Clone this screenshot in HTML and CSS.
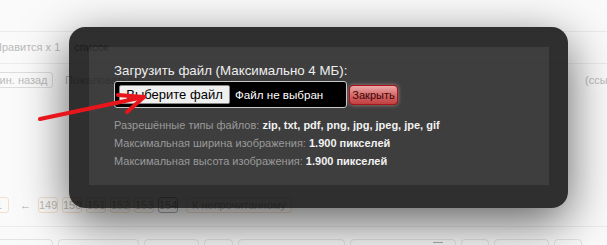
FILE: index.html
```html
<!DOCTYPE html>
<html lang="ru">
<head>
    <meta charset="UTF-8">
    <title>Загрузить файл</title>
    <link rel="stylesheet" href="styles.css">
</head>
<body>
    <div class="page">
        <div class="post-bar">
            <span class="likes">Нравится x 1</span>
            <span class="list">список</span>
        </div>
        <div class="post-meta">
            <span class="time">мин. назад</span>
            <span class="report">Пожаловаться</span>
            <span class="link">(ссылка)</span>
        </div>
        <div class="pager">
            <span class="pg">1</span>
            <span class="pg-arrow">&larr;</span>
            <span class="pg">149</span>
            <span class="pg">150</span>
            <span class="pg">151</span>
            <span class="pg">152</span>
            <span class="pg">153</span>
            <span class="pg current">154</span>
            <span class="pg unread">К непрочитанному</span>
        </div>
        <div class="tabs">
            <span class="tab w58"></span>
            <span class="tab w81"></span>
            <span class="tab w55"></span>
            <span class="tab w29"></span>
            <span class="tab w107"></span>
            <span class="tab w106"><i class="menu-mark"></i></span>
            <span class="tab w28"></span>
            <span class="tab w55"></span>
            <span class="tab w28"></span>
        </div>
    </div>

    <div class="modal">
        <div class="modal-inner">
            <div class="upload-title">Загрузить файл (Максимально 4 МБ):</div>
            <div class="upload-row">
                <label class="file-box">
                    <span class="file-btn">Выберите файл</span>
                    <span class="file-name">Файл не выбран</span>
                </label>
                <button class="close-btn">Закрыть</button>
            </div>
            <div class="info">
                <p>Разрешённые типы файлов: <b>zip, txt, pdf, png, jpg, jpeg, jpe, gif</b></p>
                <p>Максимальная ширина изображения: <b>1.900 пикселей</b></p>
                <p>Максимальная высота изображения: <b>1.900 пикселей</b></p>
            </div>
        </div>
    </div>

    <!-- red annotation arrow -->
    <svg class="arrow" width="607" height="245" viewBox="0 0 607 245">
        <g fill="none" stroke="#e8161c" stroke-width="4" stroke-linecap="round" stroke-linejoin="round">
            <path d="M40 119 L144 97"/>
            <path d="M118 95 L144 97 L127 112"/>
        </g>
    </svg>
</body>
</html>
```

FILE: styles.css
```css
body {
    margin: 0;
    width: 607px;
    height: 245px;
    overflow: hidden;
    position: relative;
    background-color: #fafafa;
    font-family: 'Liberation Sans', Arial, sans-serif;
}
.page {
    padding-top: 31px;
    color: #bbb;
    font-size: 11px;
    white-space: nowrap;
}
.post-bar {
    height: 29px;
    padding-bottom: 2px;
    border-top: 1px solid #ececec;
    border-bottom: 1px solid #ececec;
    display: flex;
    align-items: center;
    margin-left: -6px;
    gap: 14px;
}
.list {
    color: #999;
}
.post-meta {
    height: 32px;
    display: flex;
    align-items: center;
    margin-left: -14px;
}
.time {
    box-sizing: border-box;
    width: 67px;
    border: 1px solid #ddd;
    border-radius: 3px;
    padding: 1px 5px;
    text-align: right;
}
.report {
    margin-left: 12px;
}
.link {
    margin-left: auto;
    margin-right: -40px;
    width: 62px;
}
.pager {
    margin-top: 101px;
    display: flex;
    align-items: center;
    gap: 4px;
    margin-left: -11px;
}
.pg {
    box-sizing: border-box;
    width: 20px;
    height: 16px;
    line-height: 14px;
    border: 1px solid #f3dfc9;
    border-radius: 3px;
    text-align: center;
    color: #c2b8ae;
}
.pg-arrow {
    width: 11px;
    margin: 0 3px 0 7px;
    color: #aaa;
}
.pg.current {
    border-color: #aaa;
    color: #aaa;
}
.pg.unread {
    width: auto;
    padding: 0 5px;
    margin-left: 4px;
}
.tabs {
    margin-top: 13px;
    border-top: 1px solid #ececec;
    padding-top: 12px;
    display: flex;
    gap: 5px;
    margin-left: -5px;
}
.tab {
    height: 20px;
    border: 1px solid #e3e3e3;
    border-radius: 4px 4px 0 0;
    box-sizing: border-box;
    position: relative;
}
.w58 { width: 58px; }
.w81 { width: 81px; }
.w55 { width: 55px; }
.w29 { width: 29px; }
.w107 { width: 107px; }
.w106 { width: 106px; }
.w28 { width: 28px; }
.menu-mark {
    position: absolute;
    left: 82px;
    top: 2px;
    width: 10px;
    height: 3px;
    border-top: 1px solid #aaa;
    border-bottom: 1px solid #aaa;
}

/* upload dialog */
.modal {
    position: absolute;
    left: 69px;
    top: 27px;
    width: 499px;
    height: 181px;
    box-sizing: border-box;
    padding: 20px 19px 23px 20px;
    border-radius: 16px;
    background-color: rgba(0, 0, 0, 0.81);
    box-shadow: 0 14px 48px rgba(0, 0, 0, 0.62);
}
.modal-inner {
    height: 100%;
    box-sizing: border-box;
    background-color: rgba(255, 255, 255, 0.075);
    padding: 16px 25px 0;
}
.upload-title {
    color: #eee;
    font-size: 13.3px;
    line-height: 15px;
}
.upload-row {
    margin-top: 3px;
    display: flex;
    align-items: center;
}
.file-box {
    box-sizing: border-box;
    width: 233px;
    height: 27px;
    background-color: #000;
    border: 1px solid #c8c8c8;
    border-radius: 3px;
    display: flex;
    align-items: center;
    padding-left: 4px;
}
.file-btn {
    box-sizing: border-box;
    width: 111px;
    height: 19px;
    line-height: 17px;
    background-color: #efefef;
    border: 1px solid #888;
    border-radius: 2px;
    color: #000;
    font-size: 13px;
    text-align: center;
}
.file-name {
    margin-left: 5px;
    color: #fff;
    font-size: 11.6px;
}
.close-btn {
    margin-left: 2px;
    width: 49px;
    height: 20px;
    padding: 0;
    border: 1px solid #a8141a;
    border-radius: 4px;
    background: linear-gradient(#eda8a8, #d56a6a 50%, #c24040);
    box-shadow: 0 0 4px rgba(255, 190, 190, 0.55);
    color: #3a0808;
    font-family: 'Liberation Sans', Arial, sans-serif;
    font-size: 11px;
    cursor: pointer;
}
.info {
    margin-top: 8px;
}
.info p {
    margin: 0;
    font-size: 11px;
    line-height: 18px;
    color: #9a9a9a;
}
.info b {
    color: #f2f2f2;
}
.arrow {
    position: absolute;
    left: 0;
    top: 0;
}
```
